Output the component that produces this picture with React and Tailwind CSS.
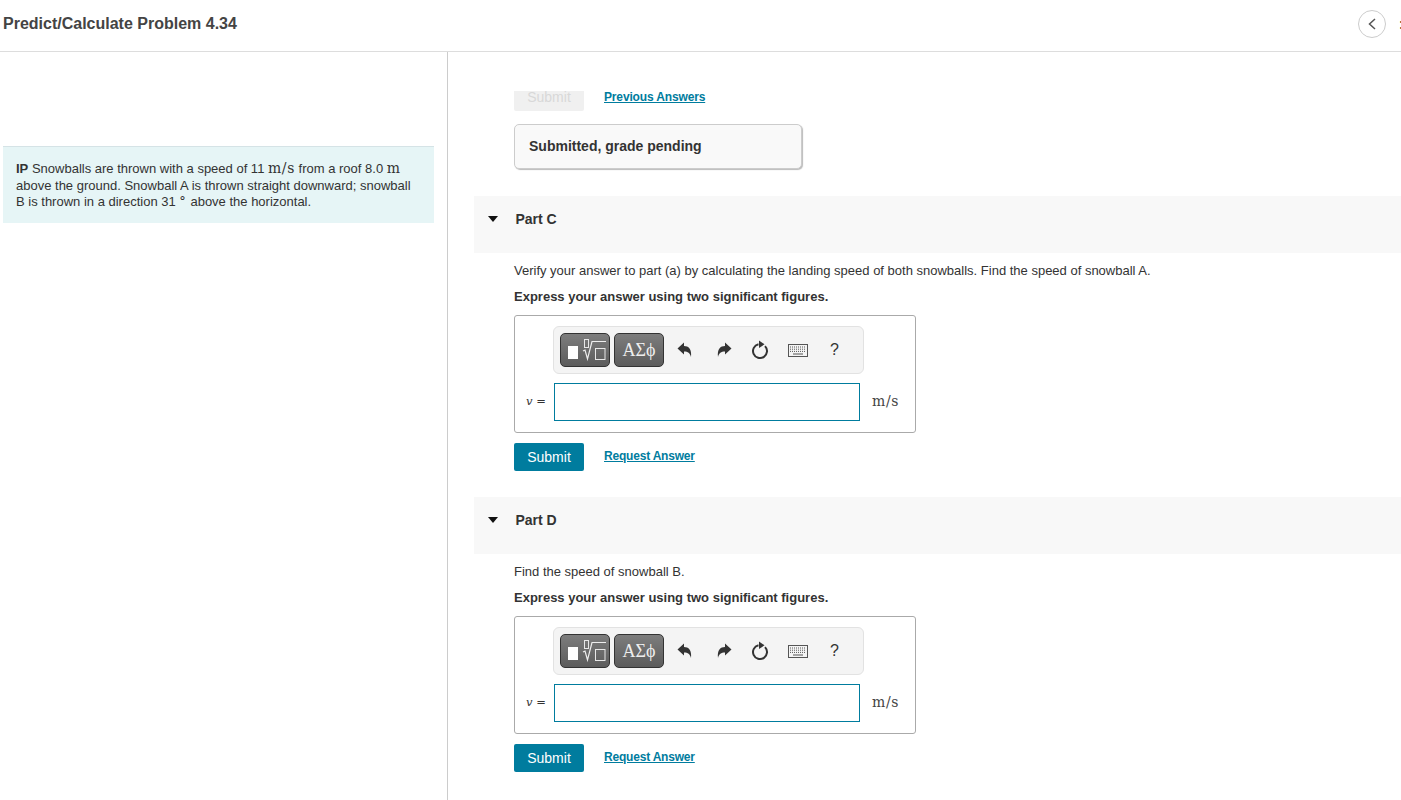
import React from "react";

const sans = "font-['Liberation_Sans',Arial,sans-serif]";
const math = "font-['DejaVu_Serif',serif]";

const TemplatesIcon = () => (
    <svg width="48" height="32" viewBox="0 0 48 32" fill="none">
        <rect x="7" y="12" width="10" height="13" fill="#fff" />
        <rect x="23.5" y="5.5" width="4" height="8" stroke="#e8e8e8" />
        <path d="M22 17 L24 16 L26.5 25 L31 7.5 H45" stroke="#eee" strokeWidth="1.2" />
        <rect x="34.5" y="14.5" width="9.5" height="11" stroke="#e8e8e8" />
    </svg>
);

const UndoIcon = ({ flip }) => (
    <svg width="16" height="16" viewBox="0 0 16 16" className={flip ? "-scale-x-100" : ""}>
        <path d="M0.5 6.5 L7 0.5 V4 C11.5 4 15 7 14 15 C13 11 11 9.5 7 9.5 V12.5 Z" fill="#333" />
    </svg>
);

const RefreshIcon = () => (
    <svg width="18" height="20" viewBox="0 0 18 20" fill="none">
        <path d="M14 6.1 A7 7 0 1 1 7.5 4.2" stroke="#333" strokeWidth="2" />
        <path d="M8 0.5 L13.5 4.3 L8 8 Z" fill="#333" />
    </svg>
);

const KeyboardIcon = () => (
    <svg width="20" height="13" viewBox="0 0 20 13" fill="none">
        <rect x="0.5" y="0.5" width="19" height="12" fill="#f4f4f4" stroke="#555" />
        <path d="M2 3 H18 M2 5.2 H18 M2 7.4 H18" stroke="#555" strokeDasharray="1 1" />
        <path d="M5 10 H15" stroke="#555" />
    </svg>
);

const Toolbar = () => (
    <div className="ml-[38px] flex h-[48px] w-[311px] items-center rounded-md border border-[#e2e2e2] bg-[#f4f4f4] pl-[6px]">
        <div className="flex h-[34px] w-[50px] items-center justify-center rounded-[5px] border border-[#333] bg-gradient-to-b from-[#7d7d7d] to-[#5c5c5c]">
            <TemplatesIcon />
        </div>
        <div className="ml-[4px] flex h-[34px] w-[50px] items-center justify-center rounded-[5px] border border-[#333] bg-gradient-to-b from-[#7d7d7d] to-[#5c5c5c] font-['Liberation_Serif',serif] text-[18px] text-[#eee]">
            ΑΣϕ
        </div>
        <div className="ml-[13px] flex w-[16px] justify-center"><UndoIcon /></div>
        <div className="ml-[23px] flex w-[16px] justify-center"><UndoIcon flip /></div>
        <div className="ml-[19px] flex w-[18px] justify-center"><RefreshIcon /></div>
        <div className="ml-[19px] flex w-[20px] justify-center"><KeyboardIcon /></div>
        <div className="ml-[22px] font-['Liberation_Sans',sans-serif] text-[16px] text-[#333]">?</div>
    </div>
);

const AnswerBox = () => (
    <div className="h-[118px] w-[402px] rounded-[3px] border border-[#aaaaaa] bg-white pt-[10px]">
        <Toolbar />
        <div className="mt-[9px] flex items-center">
            <div className={`${math} w-[39px] pl-[11px] text-[11.5px] text-[#333]`}><i>v</i> =</div>
            <div className="h-[38px] w-[306px] border border-[#007c9e] bg-white" />
            <div className={`${math} ml-[12px] mb-[2px] text-[14px] font-medium tracking-[0.6px] text-[#444]`}>m/s</div>
        </div>
    </div>
);

const Part = ({ name, question }) => (
    <section>
        <div className="flex h-[57px] items-center bg-[#f8f8f8] pb-[11px] pl-[14px]">
            <div className="h-0 w-0 border-x-[5.5px] border-t-[6px] border-x-transparent border-t-[#111]" />
            <h3 className="ml-[17.5px] text-[14px] font-bold text-[#333]">{name}</h3>
        </div>
        <div className="pl-[40px]">
            <p className="mt-[10px] h-[16px] text-[13px] leading-[16px] text-[#333]">{question}</p>
            <p className="mt-[10px] mb-[10px] h-[16px] text-[13px] leading-[16px] font-bold text-[#333]">Express your answer using two significant figures.</p>
            <AnswerBox />
            <div className="mt-[10px] flex items-start">
                <button className="h-[28px] w-[70px] rounded-[2px] bg-[#007c9e] text-[14px] text-white">Submit</button>
                <a className="ml-[20px] mt-[4px] text-[12px] font-bold tracking-[-0.2px] text-[#007c9e] underline">Request Answer</a>
            </div>
        </div>
    </section>
);

export default function App() {
    return (
        <div className={`${sans} h-[800px] w-full overflow-hidden bg-white text-[#333]`}>
            <header className="flex h-[52px] items-center justify-between border-b border-[#dddddd] pl-[3px]">
                <h1 className="mb-[4px] text-[16px] font-bold text-[#444]">Predict/Calculate Problem 4.34</h1>
                <div className="mb-[4px] flex items-center">
                    <div className="flex h-[28px] w-[28px] items-center justify-center rounded-full border border-[#cccccc]">
                        <svg width="10" height="14" viewBox="0 0 10 14" fill="none">
                            <path d="M8 2 L2.5 7 L8 12" stroke="#555" strokeWidth="1.5" />
                        </svg>
                    </div>
                    <span className="ml-[13px] mr-[-1px] w-[3px] text-[14px] font-bold leading-none text-[#333]">:</span>
                </div>
            </header>
            <div className="flex h-[748px]">
                <aside className="h-full w-[448px] shrink-0 border-r border-[#cccccc] pl-[3px] pt-[94px]">
                    <div className="h-[77px] w-[431px] border-t border-[#d5e3e6] bg-[#e6f5f6] pl-[13px] pt-[13px] pr-[20px] text-[13px] leading-[16.5px] text-[#333]">
                        <b>IP</b> Snowballs are thrown with a speed of 11 <span className={`${math} text-[14px] font-medium tracking-[0.6px]`}>m/s</span> from a roof 8.0 <span className={`${math} text-[14px] font-medium`}>m</span> above the ground. Snowball A is thrown straight downward; snowball B is thrown in a direction 31 <span className={`${math} pr-[1px] text-[13px]`}>°</span> above the horizontal.
                    </div>
                </aside>
                <main className="min-w-0 flex-1 pl-[26px]">
                    <div className="pl-[40px] pt-[39px]">
                        <div className="flex items-start">
                            <div className="flex h-[20px] w-[70px] items-end justify-center overflow-hidden rounded-b-[2px] bg-[#f0f0f0]">
                                <span className="mb-[6px] text-[14px] leading-[16px] text-[#d8d8d8]">Submit</span>
                            </div>
                            <a className="ml-[20px] text-[12px] font-bold leading-[12px] tracking-[-0.15px] text-[#007c9e] underline">Previous Answers</a>
                        </div>
                        <div className="mt-[13px] flex h-[45px] w-[288px] items-center rounded-[5px] border border-[#cccccc] bg-[#f9f9f9] pl-[14px] text-[14px] font-bold text-[#333] shadow-[1px_1px_1px_#bbb]">
                            Submitted, grade pending
                        </div>
                    </div>
                    <div className="mt-[27px]">
                        <Part name="Part C" question="Verify your answer to part (a) by calculating the landing speed of both snowballs. Find the speed of snowball A." />
                    </div>
                    <div className="mt-[26px]">
                        <Part name="Part D" question="Find the speed of snowball B." />
                    </div>
                </main>
            </div>
        </div>
    );
}
